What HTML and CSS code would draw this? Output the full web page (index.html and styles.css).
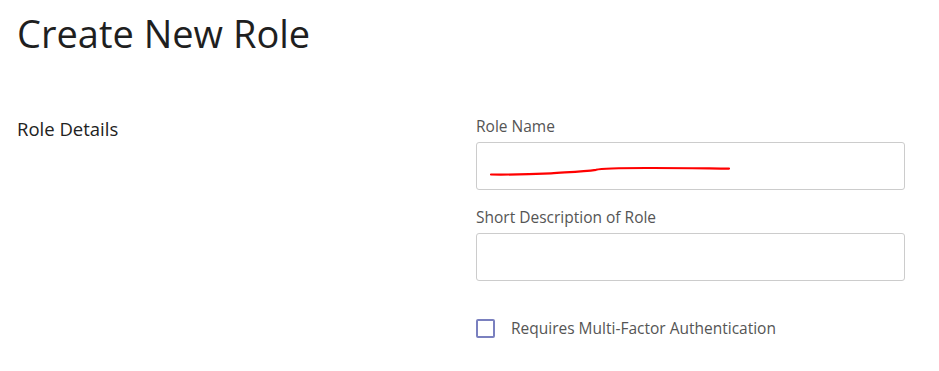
FILE: index.html
```html
<!DOCTYPE html>
<html lang="en">
<head>
    <meta charset="UTF-8">
    <meta name="viewport" content="width=device-width, initial-scale=1.0">
    <title>Create New Role</title>
    <link rel="stylesheet" href="styles.css">
</head>
<body>
    <div class="page">
        <h1>Create New Role</h1>

        <div class="section">
            <div class="section-title">Role Details</div>

            <div class="fields">
                <div class="field">
                    <label class="field-label" for="roleName">Role Name</label>
                    <div class="input-wrap">
                        <input type="text" id="roleName" class="text-input">
                        <!-- scribble over the name -->
                        <svg class="scribble" width="260" height="14" viewBox="0 0 260 14">
                            <path d="M15 10.5 C40 10.8 60 10 75 9.3 C95 8 108 7.6 120 5.8 C126 4.2 140 4 170 4 C200 3.9 230 4.4 253 4.6" fill="none" stroke="#ff0000" stroke-width="2.2" stroke-linecap="round"/>
                        </svg>
                    </div>
                </div>

                <div class="field">
                    <label class="field-label" for="roleDesc">Short Description of Role</label>
                    <input type="text" id="roleDesc" class="text-input">
                </div>

                <label class="check-row">
                    <input type="checkbox" class="check-input">
                    <span class="check-box"></span>
                    <span class="check-text">Requires Multi-Factor Authentication</span>
                </label>
            </div>
        </div>
    </div>
</body>
</html>
```

FILE: styles.css
```css
body {
    font-family: 'Open Sans', 'Noto Sans', sans-serif;
    background-color: #ffffff;
    color: #212121;
    margin: 0;
    padding: 0;
}

.page {
    padding: 9px 17px 0 17px;
}

h1 {
    font-size: 38px;
    font-weight: 400;
    margin: 0;
    line-height: 48px;
    color: #1f1f1f;
}

.section {
    display: grid;
    grid-template-columns: 459px 429px;
    margin-top: 55px;
}

.section-title {
    font-size: 18.5px;
    color: #222222;
    padding-top: 4px;
}

.fields {
    display: flex;
    flex-direction: column;
}

.field {
    display: flex;
    flex-direction: column;
    margin-bottom: 13px;
}

.field-label {
    font-size: 15.5px;
    color: #555555;
    line-height: 22px;
    padding-top: 3px;
    margin-bottom: 5px;
}

.input-wrap {
    position: relative;
}

.text-input {
    box-sizing: border-box;
    width: 100%;
    height: 48px;
    border: 1px solid #cccccc;
    border-radius: 3px;
    margin: 0;
    font: inherit;
}

.scribble {
    position: absolute;
    left: 0;
    top: 22px;
}

.check-row {
    display: flex;
    align-items: center;
    margin-top: 23px;
    cursor: pointer;
}

.check-input {
    display: none;
}

.check-box {
    box-sizing: border-box;
    width: 19px;
    height: 19px;
    border: 2px solid #7a80bf;
    border-radius: 2px;
    margin-right: 16px;
}

.check-text {
    font-size: 15.5px;
    color: #555555;
}
```
